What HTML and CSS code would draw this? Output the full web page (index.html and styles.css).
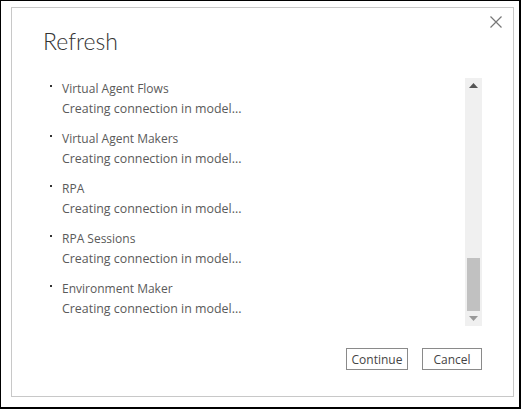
FILE: index.html
```html
<!DOCTYPE html>
<html lang="en">
<head>
<meta charset="utf-8">
<title>Refresh</title>
<link rel="stylesheet" href="styles.css">
</head>
<body>
<div class="frame">
  <div class="dialog">
    <button class="close" aria-label="Close">
      <svg width="12" height="12" viewBox="0 0 12 12"><path d="M0.5 0.5 L11.5 11.5 M11.5 0.5 L0.5 11.5" stroke="#777" stroke-width="1.2" fill="none"/></svg>
    </button>
    <h1 class="title">Refresh</h1>
    <div class="content">
      <ul class="list">
        <li class="item"><span class="dot"></span><div class="text"><div class="label">Virtual Agent Flows</div><div class="status">Creating connection in model...</div></div></li>
        <li class="item"><span class="dot"></span><div class="text"><div class="label">Virtual Agent Makers</div><div class="status">Creating connection in model...</div></div></li>
        <li class="item"><span class="dot"></span><div class="text"><div class="label">RPA</div><div class="status">Creating connection in model...</div></div></li>
        <li class="item"><span class="dot"></span><div class="text"><div class="label">RPA Sessions</div><div class="status">Creating connection in model...</div></div></li>
        <li class="item"><span class="dot"></span><div class="text"><div class="label">Environment Maker</div><div class="status">Creating connection in model...</div></div></li>
      </ul>
      <div class="scrollbar">
        <div class="arrow up"><svg width="9" height="5" viewBox="0 0 9 5"><path d="M4.5 0 L9 5 L0 5 Z" fill="#555"/></svg></div>
        <div class="track"><div class="thumb"></div></div>
        <div class="arrow down"><svg width="9" height="5" viewBox="0 0 9 5"><path d="M0 0 L9 0 L4.5 5 Z" fill="#999"/></svg></div>
      </div>
    </div>
    <div class="actions">
      <button class="btn">Continue</button>
      <button class="btn">Cancel</button>
    </div>
  </div>
</div>
</body>
</html>
```

FILE: styles.css
```css
* { box-sizing: border-box; }
html, body { margin: 0; padding: 0; background: #fff; }
body { font-family: "Open Sans", "Noto Sans", sans-serif; }

.frame {
  width: 521px;
  height: 409px;
  border-style: solid;
  border-color: #000;
  border-width: 1px 2px 2px 1px;
  padding: 6px 5px 10px 10px;
  display: flex;
}

.dialog {
  position: relative;
  flex: 1;
  border: 1px solid #c8c8c8;
  background: #fff;
  padding: 17px 31px 26px 31px;
  display: flex;
  flex-direction: column;
}

.close {
  position: absolute;
  top: 8px;
  right: 11px;
  width: 12px;
  height: 12px;
  padding: 0;
  border: 0;
  background: none;
  display: block;
}
.close svg { display: block; }

.title {
  margin: 0;
  font-family: "Lato", "Open Sans", sans-serif;
  font-size: 23px;
  line-height: 33px;
  font-weight: 300;
  color: #333;
}

.content {
  margin-top: 20px;
  height: 248px;
  display: flex;
}

.list {
  list-style: none;
  margin: 0;
  padding: 0;
  flex: 1;
  overflow: hidden;
}

.item {
  height: 50px;
  padding-top: 1px;
  display: flex;
}

.dot {
  width: 2px;
  height: 2px;
  background: #333;
  margin: 6px 10px 0 7px;
  flex: none;
}

.label {
  font-size: 12px;
  line-height: 20px;
  color: #5a5a5a;
}

.status {
  font-size: 12.4px;
  line-height: 20px;
  color: #5a5a5a;
}

.scrollbar {
  width: 17px;
  background: #f0f0f0;
  display: flex;
  flex-direction: column;
}

.arrow {
  height: 15px;
  display: flex;
  align-items: center;
  justify-content: center;
}
.arrow svg { display: block; }

.track {
  flex: 1;
  display: flex;
  flex-direction: column;
  justify-content: flex-end;
  padding: 0 2px;
}

.thumb {
  height: 53px;
  background: #c1c1c1;
}

.actions {
  margin-top: 22px;
  display: flex;
  justify-content: flex-end;
  gap: 14px;
}

.btn {
  height: 22px;
  padding: 0;
  border: 1px solid #8a8a8a;
  background: #fff;
  font-family: "Open Sans", "Noto Sans", sans-serif;
  font-size: 12px;
  color: #444;
}
.btn:first-child { width: 62px; }
.btn:last-child { width: 60px; }
```
